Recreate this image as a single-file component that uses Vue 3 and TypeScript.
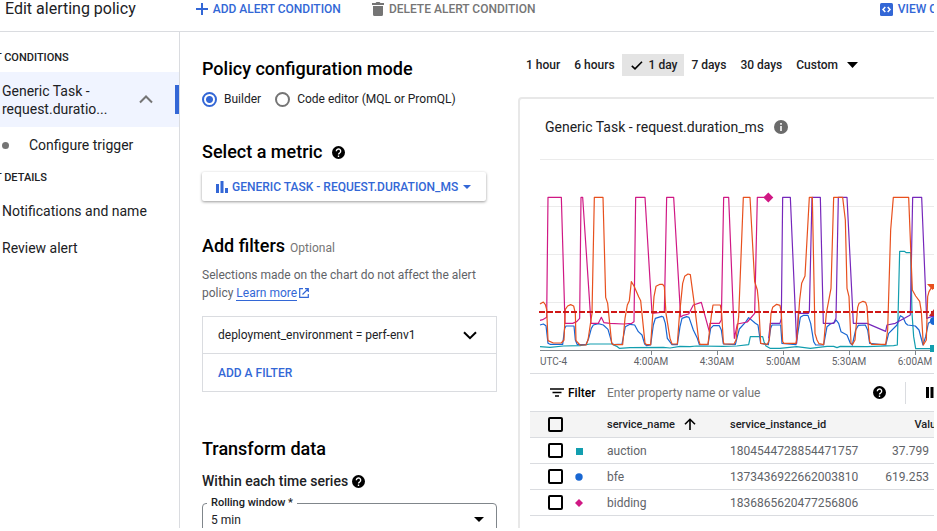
<script setup lang="ts">
import { ref } from 'vue'

type Shape = 'square' | 'circle' | 'diamond'

interface Row {
  name: string
  id: string
  value: string
  shape: Shape
}

interface Series {
  key: string
  points: string
}

const mode = ref<'builder' | 'code'>('builder')
const range = ref('1 day')
const ranges = ['1 hour', '6 hours', '1 day', '7 days', '30 days']
const rollingWindow = ref('5 min')
const propertyFilter = ref('')
const selected = ref<string[]>([])

const rows: Row[] = [
  { name: 'auction', id: '1804544728854471757', value: '37.799', shape: 'square' },
  { name: 'bfe', id: '1373436922662003810', value: '619.253', shape: 'circle' },
  { name: 'bidding', id: '1836865620477256806', value: '', shape: 'diamond' },
]

const ticks = [
  { x: 121, label: '4:00AM' },
  { x: 187, label: '4:30AM' },
  { x: 253, label: '5:00AM' },
  { x: 319, label: '5:30AM' },
  { x: 385, label: '6:00AM' },
]

const gridLines = [4, 51, 99, 147]

// Sample coordinates are stored in thirds of a plot unit.
const series: Series[] = [
  {
    key: 'teal',
    points:
      '30,500 60,502 100,498 150,497 180,492 245,492 262,500 268,505 300,503 400,502 420,504 450,499 480,500 500,498 580,499 620,498 656,494 661,470 698,470 702,485 708,498 720,505 750,505 800,500 841,505 891,499 911,499 921,503 931,499 1011,500 1091,497 1102,495 1109,214 1123,214 1129,218 1142,218 1146,400 1151,470 1157,506 1211,506',
  },
  {
    key: 'blue',
    points:
      '30,435 40,432 48,437 54,490 60,493 98,493 104,445 108,438 132,438 136,480 142,494 168,494 176,475 184,445 190,435 205,431 220,435 234,448 246,490 252,494 276,492 286,440 300,433 314,435 325,455 336,465 344,492 350,497 362,495 370,435 376,415 395,409 400,411 406,430 412,475 426,494 442,494 450,440 456,415 470,410 477,412 490,450 502,475 508,494 534,494 542,445 550,437 568,437 574,450 580,492 616,494 622,470 628,447 648,425 656,413 676,430 684,435 692,490 715,494 722,445 726,435 752,435 756,490 798,494 811,412 821,406 834,406 842,430 851,485 857,495 881,495 891,440 901,432 913,428 918,420 926,430 933,455 951,465 961,490 967,495 977,450 985,436 1006,435 1013,450 1019,490 1067,495 1076,460 1101,435 1111,407 1119,412 1127,430 1133,435 1156,438 1167,450 1179,495 1187,470 1195,430 1206,422',
  },
  {
    key: 'magenta',
    points:
      '30,421 38,419 50,412 54,52 94,52 105,430 128,430 140,425 149,415 153,52 158,52 183,430 205,430 214,412 222,428 240,430 280,432 305,430 312,425 317,52 345,52 366,400 403,396 410,52 431,52 452,411 460,406 476,402 490,375 514,367 538,455 540,430 568,430 574,420 581,52 596,52 613,475 622,432 652,426 674,400 682,52 715,52',
  },
  {
    key: 'purple',
    points:
      '716,475 721,430 750,430 754,415 758,52 781,52 800,490 805,400 835,400 838,395 846,52 871,52 880,430 911,430 918,415 925,52 951,52 970,430 1011,430 1067,454 1071,435 1096,430 1104,425 1141,405 1148,52 1175,52 1190,415 1204,410 1212,410',
  },
  {
    key: 'orange',
    points:
      '30,372 40,366 46,374 50,388 54,482 70,489 94,489 102,480 106,388 113,378 122,374 131,378 136,400 138,482 150,495 168,495 174,480 186,400 193,52 219,52 227,352 233,370 245,490 250,494 278,494 285,415 292,375 298,362 304,305 312,318 326,350 332,362 345,490 350,494 362,494 372,350 378,319 390,313 398,313 403,320 408,400 420,475 426,492 442,492 448,410 458,310 464,289 474,282 481,284 494,380 506,480 510,493 534,493 540,440 545,400 549,375 571,375 575,400 580,485 582,492 612,492 618,480 626,410 640,52 660,52 674,305 682,330 686,370 692,490 712,493 718,480 723,400 728,382 740,373 750,376 754,400 758,485 762,490 798,490 801,470 809,360 815,310 825,288 838,52 847,52 855,460 861,480 867,491 881,494 889,400 903,325 911,52 938,52 946,120 951,325 957,350 963,490 967,494 975,480 983,382 987,370 999,364 1007,367 1011,380 1015,440 1019,485 1025,493 1067,493 1073,450 1082,150 1090,52 1136,52 1147,330 1157,348 1169,364 1174,395 1180,495 1189,480 1193,350 1197,335 1206,320',
  },
]
</script>

<template>
  <div class="page">
    <div class="app">
      <header class="topbar">
        <h1>Edit alerting policy</h1>
        <button class="action add" type="button">
          <svg width="12" height="12" viewBox="0 0 12 12" aria-hidden="true">
            <path d="M6 0v12M0 6h12" stroke="currentColor" stroke-width="2" />
          </svg>
          ADD ALERT CONDITION
        </button>
        <button class="action muted" type="button">
          <svg width="12" height="14" viewBox="0 0 12 14" aria-hidden="true">
            <path d="M0 1h3.500l1-1h3l1 1H12v2H0zM1 4h10v8.500q0 1.500-1.500 1.500h-7Q1 14 1 12.500z" fill="currentColor" />
          </svg>
          DELETE ALERT CONDITION
        </button>
        <button class="action view" type="button">
          <svg width="13" height="13" viewBox="0 0 13 13" aria-hidden="true">
            <rect width="13" height="13" rx="1.500" fill="currentColor" />
            <path d="M5.300 4L3 6.500 5.300 9M7.700 4L10 6.500 7.700 9" fill="none" stroke="#fff" stroke-width="1.500" />
          </svg>
          VIEW CODE
        </button>
      </header>

      <div class="body">
        <nav class="sidebar">
          <h2>ALERT CONDITIONS</h2>
          <a href="#condition" class="current">
            <span>Generic Task -<br />request.duratio...</span>
            <svg width="14" height="9" viewBox="0 0 14 9" aria-hidden="true">
              <path d="M1 7.500l6-6 6 6" fill="none" stroke="#757575" stroke-width="2" />
            </svg>
          </a>
          <a href="#trigger" class="step">Configure trigger</a>
          <h2 class="second">ALERT DETAILS</h2>
          <a href="#notifications">Notifications and name</a>
          <a href="#review">Review alert</a>
        </nav>

        <main>
          <section class="config">
            <h2>Policy configuration mode</h2>
            <div class="modes">
              <label><input v-model="mode" type="radio" name="mode" value="builder" />Builder</label>
              <label><input v-model="mode" type="radio" name="mode" value="code" />Code editor (MQL or PromQL)</label>
            </div>

            <h2 class="metric-title">
              Select a metric
              <svg class="help" width="13" height="13" viewBox="0 0 24 24" aria-hidden="true">
                <circle cx="12" cy="12" r="12" />
                <path d="M8 9.500a4 4 0 1 1 6.500 3.100C13 13.700 12 14 12 15.700M12 17.500v2.700" />
              </svg>
            </h2>
            <button class="metric" type="button">
              <svg width="12" height="12" viewBox="0 0 12 12" aria-hidden="true">
                <path d="M0 3h3v9H0zM4.500 0h3v12h-3zM9 7h3v5H9z" fill="currentColor" />
              </svg>
              <span>GENERIC TASK - REQUEST.DURATION_MS</span>
              <svg width="8" height="4" viewBox="0 0 8 4" aria-hidden="true"><path d="M0 0h8L4 4z" fill="currentColor" /></svg>
            </button>

            <h2 class="filters-title">Add filters <small>Optional</small></h2>
            <p>
              Selections made on the chart do not affect the alert policy
              <a href="#learn">Learn more</a>
              <svg width="10" height="10" viewBox="0 0 10 10" aria-hidden="true">
                <path d="M4 .7H.7v8.600h8.600V6M6 .7h3.300V4M9 1L3.500 6.500" fill="none" stroke="currentColor" stroke-width="1.200" />
              </svg>
            </p>
            <div class="filters">
              <button type="button" class="filter">
                deployment_environment = perf-env1
                <svg width="14" height="9" viewBox="0 0 14 9" aria-hidden="true">
                  <path d="M1 1.200l6 6 6-6" fill="none" stroke="#000" stroke-width="2" />
                </svg>
              </button>
              <button type="button" class="add-filter">ADD A FILTER</button>
            </div>

            <h2 class="transform-title">Transform data</h2>
            <h3>
              Within each time series
              <svg class="help" width="13" height="13" viewBox="0 0 24 24" aria-hidden="true">
                <circle cx="12" cy="12" r="12" />
                <path d="M8 9.500a4 4 0 1 1 6.500 3.100C13 13.700 12 14 12 15.700M12 17.500v2.700" />
              </svg>
            </h3>
            <div class="field">
              <label for="rolling">Rolling window *</label>
              <select id="rolling" v-model="rollingWindow">
                <option>5 min</option>
                <option>10 min</option>
                <option>1 hour</option>
              </select>
              <svg width="10" height="5" viewBox="0 0 10 5" aria-hidden="true"><path d="M0 0h10L5 5z" /></svg>
            </div>
          </section>

          <section class="preview">
            <div class="ranges">
              <button
                v-for="r in ranges"
                :key="r"
                type="button"
                :class="{ active: r === range }"
                @click="range = r"
              >
                <svg v-if="r === range" width="12" height="9" viewBox="0 0 12 9" aria-hidden="true">
                  <path d="M.8 4.800l3.200 3 7-7" fill="none" stroke="#000" stroke-width="1.600" />
                </svg>
                {{ r }}
              </button>
              <button type="button" class="custom">
                Custom
                <svg width="11" height="6" viewBox="0 0 11 6" aria-hidden="true"><path d="M0 0h11L5.500 6z" /></svg>
              </button>
            </div>

            <div class="card">
              <div class="card-title">
                Generic Task - request.duration_ms
                <svg width="14" height="14" viewBox="0 0 14 14" aria-hidden="true">
                  <circle cx="7" cy="7" r="7" fill="#6b6b6b" />
                  <path d="M7 3v1.800M7 6v5" stroke="#fff" stroke-width="1.600" />
                </svg>
              </div>

              <svg class="chart" role="img" aria-label="request.duration_ms over time">
                <line v-for="y in gridLines" :key="y" class="grid" x1="10" x2="100%" :y1="y + 0.5" :y2="y + 0.5" />
                <line class="axis" x1="10" x2="100%" y1="195.500" y2="195.500" />
                <g transform="translate(0 25) scale(0.33333)">
                  <polyline v-for="s in series" :key="s.key" :class="['series', s.key]" :points="s.points" />
                </g>
                <line class="threshold" x1="9" x2="100%" y1="157" y2="157" />
                <path class="mark-magenta" d="M238.300 37.500l5 5-5 5-5-5z" />
                <path class="mark-orange" d="M397 129h11l-5.500 6z" />
                <path class="mark-red" d="M404 154l5 7h-10z" />
                <circle class="mark-blue" cx="404" cy="166" r="4" />
                <rect class="mark-teal" x="400" y="190" width="7" height="7" />
                <g v-for="t in ticks" :key="t.x">
                  <line class="axis" :x1="t.x + 0.5" :x2="t.x + 0.5" y1="196" y2="200" />
                  <text :x="t.x" y="210" text-anchor="middle">{{ t.label }}</text>
                </g>
                <text x="10" y="210">UTC-4</text>
              </svg>

              <div class="toolbar">
                <svg width="14" height="9" viewBox="0 0 14 9" aria-hidden="true">
                  <path d="M0 1h14M2.500 4.500h9M5 8h4" stroke="#000" stroke-width="1.700" />
                </svg>
                <label for="property">Filter</label>
                <input id="property" v-model="propertyFilter" type="text" placeholder="Enter property name or value" />
                <svg class="help" width="13" height="13" viewBox="0 0 24 24" aria-hidden="true">
                  <circle cx="12" cy="12" r="12" />
                  <path d="M8 9.500a4 4 0 1 1 6.500 3.100C13 13.700 12 14 12 15.700M12 17.500v2.700" />
                </svg>
                <button type="button" aria-label="Columns">
                  <svg width="12" height="11" viewBox="0 0 12 11" aria-hidden="true">
                    <path d="M0 0h3v11H0zM4.500 0h3v11h-3zM9 0h3v11H9z" />
                  </svg>
                </button>
              </div>

              <table>
                <thead>
                  <tr>
                    <th class="check"><input type="checkbox" aria-label="Select all rows" /></th>
                    <th class="marker"></th>
                    <th class="name">
                      service_name
                      <svg width="12" height="12" viewBox="0 0 12 12" aria-hidden="true">
                        <path d="M6 12V1.500M1 6.300l5-5 5 5" fill="none" stroke="#000" stroke-width="1.600" />
                      </svg>
                    </th>
                    <th>service_instance_id</th>
                    <th class="value head">Value</th>
                  </tr>
                </thead>
                <tbody>
                  <tr v-for="row in rows" :key="row.id">
                    <td class="check">
                      <input v-model="selected" type="checkbox" :value="row.id" :aria-label="row.name" />
                    </td>
                    <td class="marker">
                      <svg width="8" height="8" viewBox="0 0 8 8" aria-hidden="true">
                        <rect v-if="row.shape === 'square'" x="1" y="1" width="7" height="7" fill="#129eaf" />
                        <circle v-else-if="row.shape === 'circle'" cx="4" cy="4" r="3.700" fill="#1967d2" />
                        <path v-else d="M4 0l4 4-4 4-4-4z" fill="#d01884" />
                      </svg>
                    </td>
                    <td>{{ row.name }}</td>
                    <td>{{ row.id }}</td>
                    <td class="value">{{ row.value }}</td>
                  </tr>
                </tbody>
              </table>
            </div>
          </section>
        </main>
      </div>
    </div>
  </div>
</template>

<style>
body {
  margin: 0;
  background: #fff;
}
</style>

<style scoped>
* {
  box-sizing: border-box;
}

.page {
  height: 100vh;
  padding: 0 3px 3px 0;
  overflow: hidden;
  font-family: Roboto, 'Liberation Sans', sans-serif;
  font-size: 12px;
  color: #202124;
}

.app {
  display: flex;
  flex-direction: column;
  height: 100%;
  overflow: hidden;
}

h1,
h2,
h3,
p {
  margin: 0;
}

button,
input,
select {
  margin: 0;
  padding: 0;
  border: 0;
  background: none;
  font: inherit;
  color: inherit;
}

button {
  display: flex;
  align-items: center;
  white-space: nowrap;
}

svg {
  flex: none;
}

.topbar {
  display: flex;
  flex: none;
  align-items: center;
  height: 32px;
  padding: 0 0 13px 5px;
  border-bottom: 1px solid #dadce0;
}

.topbar h1 {
  font-size: 16px;
  font-weight: 400;
  line-height: 18px;
  white-space: nowrap;
}

.action {
  gap: 5px;
  color: #3367d6;
  font-weight: 500;
}

.add {
  margin-left: 60px;
}

.muted {
  margin-left: 31px;
  color: #757575;
}

.view {
  margin: 0 -26px 0 auto;
}

.body {
  display: flex;
  flex: 1;
  min-height: 0;
}

.sidebar {
  flex: none;
  width: 180px;
  overflow: hidden;
  border-right: 1px solid #dadce0;
}

.sidebar h2 {
  margin-left: -31px;
  padding: 18px 0 6px;
  font-size: 11px;
  font-weight: 500;
  line-height: 16px;
  white-space: nowrap;
}

.sidebar h2.second {
  padding-top: 7px;
}

.sidebar a {
  display: flex;
  align-items: center;
  height: 37px;
  padding-left: 2px;
  color: #202124;
  font-size: 14px;
  line-height: 18px;
  text-decoration: none;
}

.sidebar .current {
  justify-content: space-between;
  height: 55px;
  padding-right: 26px;
  background: linear-gradient(#3367d6, #3367d6) right center / 4px 29px no-repeat #f0f4ff;
}

.sidebar .step {
  gap: 20px;
  height: 36px;
}

.sidebar .step::before {
  width: 7px;
  height: 7px;
  border-radius: 50%;
  background: #757575;
  content: '';
}

main {
  display: flex;
  flex: 1;
  gap: 21px;
  min-width: 0;
  padding-left: 22px;
}

.config {
  flex: none;
  width: 295px;
  padding-top: 25px;
}

.config h2 {
  display: flex;
  align-items: center;
  gap: 10px;
  color: #000;
  font-size: 18px;
  font-weight: 500;
  line-height: 24px;
}

.help {
  fill: #000;
}

.help path {
  fill: none;
  stroke: #fff;
  stroke-width: 2.500;
}

.modes {
  display: flex;
  gap: 14px;
  margin-top: 10px;
}

.modes label {
  display: flex;
  align-items: center;
  gap: 7px;
  line-height: 16px;
}

.modes input {
  width: 15px;
  height: 15px;
  border: 2px solid #757575;
  border-radius: 50%;
  appearance: none;
}

.modes input:checked {
  border-color: #3367d6;
  background: radial-gradient(circle, #3367d6 3px, #fff 4px);
}

.config .metric-title {
  margin-top: 33px;
}

.metric {
  gap: 4px;
  width: 284px;
  height: 29px;
  margin-top: 8px;
  padding: 0 15px 0 14px;
  border-radius: 2px;
  box-shadow: 0 1px 3px rgba(0, 0, 0, 0.4);
  color: #3367d6;
  font-weight: 500;
}

.metric svg:last-child {
  margin-left: auto;
}

.config .filters-title {
  align-items: baseline;
  gap: 5px;
  margin-top: 33px;
}

.filters-title small {
  color: #757575;
  font-size: 12px;
  font-weight: 400;
}

p {
  margin-top: 6px;
  color: #5f6368;
  line-height: 18px;
}

p a {
  border-bottom: 1px solid #3367d6;
  color: #3367d6;
  text-decoration: none;
}

p svg {
  margin-left: 2px;
  color: #3367d6;
  vertical-align: -1px;
}

.filters {
  margin-top: 14px;
  border: 1px solid #dadce0;
}

.filters button {
  justify-content: space-between;
  width: 100%;
  height: 37px;
  padding: 0 19px 0 15px;
}

.filters .filter {
  border-bottom: 1px solid #dadce0;
}

.filters .add-filter {
  color: #3367d6;
  font-weight: 500;
}

.config .transform-title {
  margin-top: 45px;
}

h3 {
  display: flex;
  align-items: center;
  gap: 4px;
  margin-top: 12px;
  font-size: 14px;
  font-weight: 500;
  line-height: 16px;
}

.field {
  position: relative;
  display: flex;
  align-items: center;
  margin-top: 14px;
  border: 1px solid #80868b;
  border-radius: 4px;
}

.field label {
  position: absolute;
  top: -8px;
  left: 4px;
  padding: 0 4px;
  background: #fff;
  font-size: 11px;
  font-weight: 500;
  line-height: 14px;
}

.field select {
  flex: 1;
  height: 31px;
  padding-left: 8px;
  appearance: none;
}

.field svg {
  margin: 0 12px 0 -22px;
  pointer-events: none;
}

.preview {
  display: flex;
  flex: 1;
  flex-direction: column;
  min-width: 0;
  padding-top: 22px;
}

.ranges {
  display: flex;
  padding-left: 1px;
  font-weight: 500;
}

.ranges button {
  gap: 6px;
  height: 22px;
  padding: 0 7px;
}

.ranges .active {
  padding-left: 9px;
  background: #e4e4e4;
}

.ranges .custom {
  gap: 9px;
}

.card {
  flex: none;
  margin: 21px -13px 0 0;
  padding: 1px 0 16px 10px;
  border: 2px solid #e8e8e8;
  border-radius: 4px;
  overflow: hidden;
}

.card-title {
  display: flex;
  align-items: center;
  gap: 10px;
  height: 55px;
  padding: 0 0 1px 15px;
  font-size: 14px;
}

.chart {
  display: block;
  width: 100%;
  height: 218px;
}

.grid {
  stroke: #ebebeb;
}

.axis {
  stroke: #80868b;
}

.threshold {
  stroke: #d01716;
  stroke-width: 2;
  stroke-dasharray: 6 2;
}

.chart text {
  fill: #5f6368;
  font-size: 10px;
}

.series {
  fill: none;
  stroke-linejoin: round;
  stroke-width: 3.600;
}

.teal {
  stroke: #129eaf;
}

.blue {
  stroke: #1967d2;
}

.magenta {
  stroke: #d01884;
}

.purple {
  stroke: #7627bb;
}

.orange {
  stroke: #e8501e;
}

.mark-magenta {
  fill: #d01884;
}

.mark-orange {
  fill: #e8501e;
}

.mark-red {
  fill: #c5221f;
}

.mark-blue {
  fill: #1967d2;
}

.mark-teal {
  fill: #129eaf;
}

.toolbar {
  display: flex;
  align-items: center;
  height: 38px;
  padding: 0 7px 0 20px;
  border-top: 1px solid #dadce0;
}

.toolbar label {
  width: 39px;
  margin-left: 4px;
  color: #000;
  font-weight: 500;
}

.toolbar input {
  flex: 1;
  min-width: 0;
  outline: 0;
}

.toolbar input::placeholder {
  color: #757575;
  opacity: 1;
}

.toolbar button {
  height: 22px;
  margin-left: 19px;
  padding-left: 20px;
  border-left: 1px solid #dadce0;
}

table {
  width: 100%;
  border-collapse: collapse;
  table-layout: fixed;
}

th,
td {
  height: 26px;
  padding: 0;
  border-top: 1px solid #dadce0;
  border-bottom: 1px solid #dadce0;
  color: #5f6368;
  font-weight: 400;
  text-align: left;
  white-space: nowrap;
}

th {
  background: #f4f4f4;
  color: #202124;
  font-size: 11px;
  font-weight: 500;
}

th svg {
  margin-left: 6px;
  vertical-align: -2px;
}

.check {
  width: 45px;
  padding-left: 18px;
}

.check input {
  display: block;
  width: 15px;
  height: 15px;
  border: 2px solid #000;
  border-radius: 2px;
  appearance: none;
}

.check input:checked {
  background: #3367d6;
}

.marker {
  width: 32px;
}

.marker svg {
  display: block;
}

.name {
  width: 123px;
}

.value {
  width: 80px;
  padding-right: 16px;
  text-align: right;
}

.value.head {
  padding-right: 3px;
}
</style>
